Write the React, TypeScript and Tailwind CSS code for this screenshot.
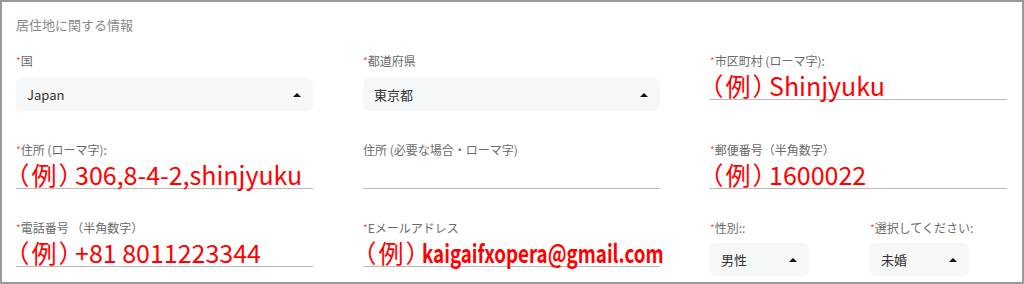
import React from 'react';

const jp = "font-['Noto_Sans_CJK_JP','Noto_Sans',sans-serif]";

const Label = ({ text, required }: { text: string; required?: boolean }) => (
  <div className="h-4 text-[12px] leading-4 text-[#6b6b6b] whitespace-nowrap">
    {required && <span className="text-[#f05050] text-[10px] align-top">*</span>}
    {text}
  </div>
);

const Caret = () => (
  <svg width="8" height="4" viewBox="0 0 8 4" className="shrink-0">
    <path d="M0 4 L4 0 L8 4 Z" fill="#111" />
  </svg>
);

const SelectField = ({
  label,
  value,
  gap = 'mt-[9px]'
}: {
  label: string;
  value: string;
  gap?: string;
}) => (
  <div>
    <Label text={label} required />
    <div
      className={`${gap} h-[33px] rounded-md bg-[#f6f7f9] flex items-center justify-between pl-[11px] pr-[12px]`}
    >
      <span className="text-[13px] text-[#333]">{value}</span>
      <Caret />
    </div>
  </div>
);

const TextField = ({
  label,
  value,
  required = true,
  narrow
}: {
  label: string;
  value?: string;
  required?: boolean;
  narrow?: boolean;
}) => (
  <div>
    <Label text={label} required={required} />
    <div className="h-[31px] border-b border-[#b9b9b9] flex items-end overflow-visible">
      {value && (
        <span className="text-[25px] leading-[28px] text-[#ff0000] whitespace-nowrap flex items-end">
          <span className="[font-feature-settings:'palt'] tracking-[3px]">（例）</span>
          <span
            className={`inline-block origin-left ${
              narrow ? 'scale-x-[0.75] font-semibold' : ''
            }`}
          >
            {value}
          </span>
        </span>
      )}
    </div>
  </div>
);

const App = () => {
  return (
    <div className={`w-[1024px] h-[284px] bg-white border-2 border-[#9a9a9a] ${jp}`}>
      <div className="pl-[14px] pt-[14px]">
        <h2 className="text-[13px] leading-[18px] text-[#888] mb-[19px]">居住地に関する情報</h2>

        <div className="grid grid-cols-[297px_297px_297px] gap-x-[50px] gap-y-[31px] items-start">
          <SelectField label="国" value="Japan" />
          <SelectField label="都道府県" value="東京都" />
          <TextField label="市区町村 (ローマ字):" value="Shinjyuku" />

          <TextField label="住所 (ローマ字):" value="306,8-4-2,shinjyuku" />
          <TextField label="住所 (必要な場合・ローマ字)" required={false} />
          <TextField label="郵便番号（半角数字）" value="1600022" />

          <TextField label="電話番号 （半角数字）" value="+81 8011223344" />
          <TextField label="Eメールアドレス" value="kaigaifxopera@gmail.com" narrow />
          <div className="grid grid-cols-[160px_137px]">
            <div className="w-[99px]">
              <SelectField label="性別::" value="男性" gap="mt-[7px]" />
            </div>
            <div className="w-[99px]">
              <SelectField label="選択してください:" value="未婚" gap="mt-[7px]" />
            </div>
          </div>
        </div>
      </div>
    </div>
  );
};

export default App;
